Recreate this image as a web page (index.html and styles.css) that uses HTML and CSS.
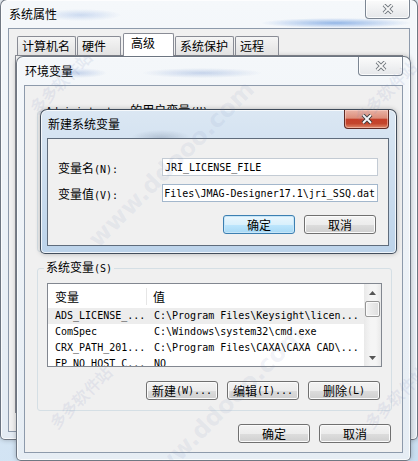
FILE: index.html
```html
<!DOCTYPE html>
<html lang="zh-CN">
	<head>
		<meta charset="UTF-8" />
		<meta name="viewport" content="width=device-width, initial-scale=1.0" />
		<title>新建系统变量</title>
		<link rel="stylesheet" href="styles.css">
	</head>
	<body>
		<div class="desktop">
			<!-- 系统属性 -->
			<div class="window win-sys">
				<div class="titlebar">
					<span class="title">系统属性</span>
					<div class="close">
						<svg width="14" height="10" viewBox="0 0 14 10"><path class="x-out" d="M3 1 L11 9 M11 1 L3 9" /><path class="x-in" d="M3 1 L11 9 M11 1 L3 9" /></svg>
					</div>
				</div>
				<div class="client">
					<div class="tabs">
						<div class="tab">计算机名</div>
						<div class="tab">硬件</div>
						<div class="tab selected">高级</div>
						<div class="tab">系统保护</div>
						<div class="tab">远程</div>
					</div>
					<div class="tab-panel"></div>
				</div>
			</div>

			<!-- 环境变量 -->
			<div class="window win-env">
				<div class="titlebar">
					<span class="title">环境变量</span>
					<div class="close">
						<svg width="14" height="10" viewBox="0 0 14 10"><path class="x-out" d="M3 1 L11 9 M11 1 L3 9" /><path class="x-in" d="M3 1 L11 9 M11 1 L3 9" /></svg>
					</div>
				</div>
				<div class="client env-body">
					<fieldset class="group user-group">
						<legend><span class="a">Administrator </span>的用户变量<span class="a">(U)</span></legend>
					</fieldset>
					<fieldset class="group">
						<legend>系统变量<span class="a">(S)</span></legend>
						<div class="list">
							<div class="list-main">
								<div class="list-head">
									<div class="col1">变量</div>
									<div class="col2">值</div>
								</div>
								<div class="row current">
									<div class="col1">ADS_LICENSE_...</div>
									<div class="col2">C:\Program Files\Keysight\licen...</div>
								</div>
								<div class="row">
									<div class="col1">ComSpec</div>
									<div class="col2">C:\Windows\system32\cmd.exe</div>
								</div>
								<div class="row">
									<div class="col1">CRX_PATH_201...</div>
									<div class="col2">C:\Program Files\CAXA\CAXA CAD\...</div>
								</div>
								<div class="row">
									<div class="col1">FP_NO_HOST_C...</div>
									<div class="col2">NO</div>
								</div>
							</div>
							<div class="scrollbar">
								<div class="sb-arrow"><svg width="7" height="4" viewBox="0 0 7 4"><path d="M0 4 L3.5 0 L7 4 Z" /></svg></div>
								<div class="sb-thumb"></div>
								<div class="sb-track"></div>
								<div class="sb-arrow"><svg width="7" height="4" viewBox="0 0 7 4"><path d="M0 0 L3.5 4 L7 0 Z" /></svg></div>
							</div>
						</div>
						<div class="button-row">
							<div class="button">新建<span class="a">(W)...</span></div>
							<div class="button">编辑<span class="a">(I)...</span></div>
							<div class="button">删除<span class="a">(L)</span></div>
						</div>
					</fieldset>
					<div class="button-row footer">
						<div class="button">确定</div>
						<div class="button">取消</div>
					</div>
				</div>
			</div>

			<!-- 新建系统变量 -->
			<div class="window win-new active">
				<div class="titlebar">
					<span class="title">新建系统变量</span>
					<div class="close">
						<svg width="14" height="10" viewBox="0 0 14 10"><path class="x-out" d="M3 1 L11 9 M11 1 L3 9" /><path class="x-in" d="M3 1 L11 9 M11 1 L3 9" /></svg>
					</div>
				</div>
				<div class="client new-body">
					<div class="field">
						<label>变量名<span class="a">(N):</span></label>
						<div class="textbox"><span class="a">JRI_LICENSE_FILE</span></div>
					</div>
					<div class="field">
						<label>变量值<span class="a">(V):</span></label>
						<div class="textbox focus end"><span class="a">Files\JMAG-Designer17.1\jri_SSQ.dat</span></div>
					</div>
					<div class="button-row dialog-buttons">
						<div class="button default">确定</div>
						<div class="button">取消</div>
					</div>
				</div>
			</div>

			<!-- watermark -->
			<span class="wm wm-url" style="left: 60px; top: 150px">www.ddooo.com</span>
			<span class="wm wm-url" style="left: 110px; top: 395px">www.ddooo.com</span>
			<span class="wm" style="left: 20px; top: 70px">多多软件站</span>
			<span class="wm" style="left: 345px; top: 80px">多多软件站</span>
			<span class="wm" style="left: 40px; top: 385px">多多软件站</span>
			<span class="wm" style="left: 355px; top: 385px">多多软件站</span>
		</div>
	</body>
</html>
```

FILE: styles.css
```css
* {
	box-sizing: border-box;
}

html,
body {
	margin: 0;
	padding: 0;
}

body {
	font-family: "Noto Sans CJK SC", "Noto Sans", sans-serif;
	font-size: 12px;
	color: #000;
	background: #d6e6f4;
	overflow: hidden;
}

.a {
	font-family: "DejaVu Sans Mono", "Liberation Mono", monospace;
	font-size: 10px;
}

.desktop {
	position: relative;
	width: 418px;
	height: 461px;
	overflow: hidden;
	background: linear-gradient(160deg, #eef5fb, #c9def1);
}

/* windows */

.window {
	position: absolute;
	display: flex;
	flex-direction: column;
	padding: 0 7px 7px 7px;
	border: 1px solid rgba(55, 65, 80, 0.7);
	border-radius: 7px 7px 5px 5px;
	box-shadow: inset 0 0 0 1px rgba(255, 255, 255, 0.75), 0 0 5px rgba(0, 0, 0, 0.25);
}

.win-sys {
	left: 0;
	top: -1px;
	width: 418px;
	height: 441px;
	background:
		radial-gradient(ellipse 75px 5px at 335px 23px, rgba(70, 130, 215, 0.55), transparent),
		radial-gradient(ellipse 40px 6px at 80px 15px, rgba(110, 150, 215, 0.3), transparent),
		linear-gradient(#f5f8fb, #e3ebf3);
}

.win-env {
	left: 16px;
	top: 56px;
	width: 395px;
	height: 405px;
	background:
		radial-gradient(ellipse 30px 5px at 60px 16px, rgba(90, 130, 200, 0.3), transparent),
		radial-gradient(ellipse 60px 5px at 185px 16px, rgba(90, 130, 200, 0.3), transparent),
		linear-gradient(#f4f7fa, #e6edf4);
}

.win-new {
	left: 40px;
	top: 109px;
	width: 357px;
	height: 145px;
	padding-left: 6px;
	border-color: rgba(40, 50, 65, 0.85);
	background:
		radial-gradient(ellipse 30px 8px at 120px 28px, rgba(70, 90, 120, 0.25), transparent),
		linear-gradient(#dbe7f3, #bcd3ea);
}

.titlebar {
	flex-shrink: 0;
	height: 28px;
	display: flex;
	justify-content: space-between;
	align-items: flex-start;
}

.title {
	line-height: 28px;
	padding-left: 1px;
}

.close {
	width: 45px;
	height: 19px;
	display: flex;
	align-items: center;
	justify-content: center;
	border: 1px solid #7c8693;
	border-top: none;
	border-radius: 0 0 4px 4px;
	background: linear-gradient(#fbfbfb, #e5e7ea);
	box-shadow: inset 0 0 0 1px rgba(255, 255, 255, 0.8);
}

.close .x-out {
	stroke: #6f757c;
	stroke-width: 3.8;
}

.close .x-in {
	stroke: #f6f6f6;
	stroke-width: 1.8;
}

.active .close {
	border-color: #5e2a24;
	background: linear-gradient(#eab3a6 0%, #dc8d7a 45%, #c5402a 52%, #c3462d 75%, #df8a6c 100%);
	box-shadow: inset 0 0 0 1px rgba(255, 220, 210, 0.5);
}

.active .close .x-out {
	stroke: #3b3b3b;
}

.active .close .x-in {
	stroke: #ffffff;
}

.client {
	flex: 1;
	display: flex;
	flex-direction: column;
	border: 1px solid #8d9aab;
	background: #f0f0f0;
}

.active .client {
	border-color: #5f6c7c;
}

/* tabs */

.tabs {
	display: flex;
	align-items: flex-end;
	height: 22px;
	margin: 4px 0 0 8px;
	position: relative;
	z-index: 1;
}

.tab {
	height: 19px;
	min-width: 44px;
	margin-right: 1px;
	padding: 0 5px 0 4px;
	line-height: 17px;
	border: 1px solid #898c95;
	border-bottom: none;
	border-radius: 2px 2px 0 0;
	background: linear-gradient(#f5f5f5, #e2e2e2);
}

.tab.selected {
	height: 23px;
	min-width: 51px;
	margin: 0 1px -1px 1px;
	padding-left: 7px;
	background: #fff;
}

.tab-panel {
	flex: 1;
	margin: 0 6px 18px 6px;
	border: 1px solid #898c95;
	background: #fcfcfc;
}

/* 环境变量 */

.env-body {
	padding: 17px 10px 0 12px;
}

.group {
	margin: 0;
	padding: 0 9px 10px 9px;
	min-width: 0;
	border: 1px solid #d5dfe5;
	border-radius: 3px;
}

.group legend {
	margin-left: -3px;
	padding: 0 2px;
	line-height: 14px;
}

.user-group {
	height: 149px;
	margin-bottom: 8px;
}

.list {
	display: flex;
	height: 84px;
	margin-top: 7px;
	border: 1px solid #828790;
	background: #fff;
}

.list-main {
	flex: 1;
	overflow: hidden;
}

.list-head {
	display: flex;
	align-items: center;
	height: 24px;
}

.list-head .col1 {
	border-right: 1px solid #e6e6e6;
}

.row {
	display: flex;
	height: 16px;
	line-height: 16px;
	font-family: "DejaVu Sans Mono", "Liberation Mono", monospace;
	font-size: 10px;
	white-space: nowrap;
}

.row.current {
	background: #ededed;
}

.col1 {
	flex-shrink: 0;
	width: 99px;
	padding-left: 7px;
	overflow: hidden;
}

.col2 {
	flex: 1;
	padding-left: 7px;
	overflow: hidden;
}

.list-head .col2 {
	padding-left: 6px;
}

.scrollbar {
	width: 17px;
	display: flex;
	flex-direction: column;
	align-items: center;
	background: linear-gradient(90deg, #e9e9e9, #f5f5f5 40%, #f5f5f5 70%, #e9e9e9);
}

.sb-arrow {
	height: 17px;
	width: 100%;
	display: flex;
	align-items: center;
	justify-content: center;
}

.sb-arrow path {
	fill: #555;
}

.sb-thumb {
	width: 15px;
	height: 16px;
	border: 1px solid #969696;
	border-radius: 2px;
	background: linear-gradient(90deg, #f3f3f3, #dedede);
	box-shadow: inset 0 0 0 1px #fafafa;
}

.sb-track {
	flex: 1;
}

/* buttons */

.button-row {
	display: flex;
	justify-content: flex-end;
	gap: 9px;
	margin: 14px 2px 0 0;
}

.button {
	width: 72px;
	height: 19px;
	display: flex;
	align-items: center;
	justify-content: center;
	line-height: 17px;
	border: 1px solid #707070;
	border-radius: 3px;
	background: linear-gradient(#f3f3f3 0%, #ececec 50%, #dddddd 51%, #cfcfcf 100%);
	box-shadow: inset 0 0 0 1px #fbfbfb;
}

.button.default {
	border-color: #3c7fb1;
	background: linear-gradient(#eaf6fd 0%, #d9f0fc 50%, #bee6fd 51%, #a7d9f5 100%);
	box-shadow: inset 0 0 0 1px #c7e6f8;
}

.footer {
	margin: 13px 1px 0 0;
}

/* 新建系统变量 */

.new-body {
	padding: 19px 10px 0 10px;
}

.field {
	display: flex;
	align-items: center;
	height: 18px;
	margin-bottom: 8px;
}

.field label {
	width: 104px;
	flex-shrink: 0;
}

.textbox {
	flex: 1;
	height: 18px;
	display: flex;
	align-items: center;
	padding: 0 2px;
	overflow: hidden;
	white-space: nowrap;
	background: #fff;
	border: 1px solid #c3cbd4;
}

.textbox.focus {
	border-color: #a3b7cc;
}

.textbox.end {
	justify-content: flex-end;
}

.dialog-buttons {
	margin-top: 5px;
}

/* watermark */

.wm {
	position: absolute;
	transform: rotate(-45deg);
	white-space: nowrap;
	font-family: "DejaVu Sans", sans-serif;
	font-weight: bold;
	font-size: 16px;
	color: rgba(120, 135, 185, 0.12);
	pointer-events: none;
}

.wm-url {
	font-size: 24px;
	color: rgba(120, 135, 185, 0.1);
}
```
